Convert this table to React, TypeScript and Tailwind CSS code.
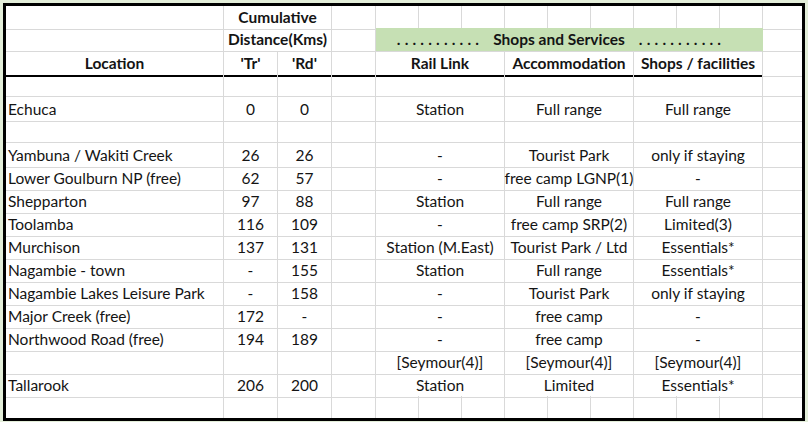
import React from 'react';

const grid =
  'grid grid-cols-[218px_54px_54px_44px_43px_43px_43px_43px_43px_43px_43px_43px_43px_40px]';
const line = 'border-r border-b border-[#d9d9d9]';

const data = [
  ['', '', '', '', '', ''],
  ['Echuca', '0', '0', 'Station', 'Full range', 'Full range'],
  ['', '', '', '', '', ''],
  ['Yambuna / Wakiti Creek', '26', '26', '-', 'Tourist Park', 'only if staying'],
  ['Lower Goulburn NP (free)', '62', '57', '-', 'free camp LGNP(1)', '-'],
  ['Shepparton', '97', '88', 'Station', 'Full range', 'Full range'],
  ['Toolamba', '116', '109', '-', 'free camp SRP(2)', 'Limited(3)'],
  ['Murchison', '137', '131', 'Station (M.East)', 'Tourist Park / Ltd', 'Essentials*'],
  ['Nagambie - town', '-', '155', 'Station', 'Full range', 'Essentials*'],
  ['Nagambie Lakes Leisure Park', '-', '158', '-', 'Tourist Park', 'only if staying'],
  ['Major Creek (free)', '172', '-', '-', 'free camp', '-'],
  ['Northwood Road (free)', '194', '189', '-', 'free camp', '-'],
  ['', '', '', '[Seymour(4)]', '[Seymour(4)]', '[Seymour(4)]'],
  ['Tallarook', '206', '200', 'Station', 'Limited', 'Essentials*'],
];

const Cell: React.FC<{ className?: string; children?: React.ReactNode }> = ({ className = '', children }) => (
  <div className={`${line} flex items-center justify-center whitespace-nowrap overflow-visible ${className}`}>
    {children}
  </div>
);

const App: React.FC = () => {
  const smallCols = Array.from({ length: 9 });

  return (
    <div className="w-[808px] h-[422px] bg-[#e3eed9] pt-[3px] px-[3px]">
      <div
        className="h-[418px] border-[3px] border-black bg-white text-[15.5px] text-[#141414] overflow-hidden"
        style={{ fontFamily: 'Lato, "Open Sans", sans-serif' }}
      >
        {/* header row 1 */}
        <div className={`${grid} h-[22px] font-bold`}>
          <Cell />
          <Cell className="col-span-2">Cumulative</Cell>
          <Cell />
          {smallCols.map((_, i) => (
            <Cell key={i} />
          ))}
          <Cell className="border-r-0" />
        </div>

        {/* header row 2 */}
        <div className={`${grid} h-[24px] font-bold`}>
          <Cell />
          <Cell className="col-span-2">Distance(Kms)</Cell>
          <Cell />
          <Cell className="col-span-9 bg-[#c6e0b4] border-r-[#c6e0b4] pr-[20px]">
            <span className="tracking-[0.2px]">. . . . . . . . . . .</span>
            <span className="mx-[14px]">Shops and Services</span>
            <span className="tracking-[0.2px]">. . . . . . . . . . .</span>
          </Cell>
          <Cell className="border-r-0" />
        </div>

        {/* header row 3 */}
        <div className={`${grid} h-[22px] font-bold`}>
          <Cell className="border-b-2 border-b-black">Location</Cell>
          <Cell className="border-b-2 border-b-black">'Tr'</Cell>
          <Cell className="border-b-2 border-b-black">'Rd'</Cell>
          <Cell className="border-b-2 border-b-black" />
          <Cell className="col-span-3 border-b-2 border-b-black">Rail Link</Cell>
          <Cell className="col-span-3 border-b-2 border-b-black">Accommodation</Cell>
          <Cell className="col-span-3 border-b-2 border-b-black">Shops / facilities</Cell>
          <Cell className="border-r-0" />
        </div>

        {data.map((r, i) => (
          <div key={i} className={`${grid} h-[23px]`}>
            <Cell className="justify-start pl-[2px] pt-[1px]">{r[0]}</Cell>
            <Cell className="pt-[1px]">{r[1]}</Cell>
            <Cell className="pt-[1px]">{r[2]}</Cell>
            <Cell />
            <Cell className="col-span-3 pt-[1px]">{r[3]}</Cell>
            <Cell className="col-span-3 pt-[1px]">{r[4]}</Cell>
            <Cell className="col-span-3 pt-[1px]">{r[5]}</Cell>
            <Cell className="border-r-0" />
          </div>
        ))}

        {/* trailing empty row */}
        <div className={`${grid} h-[22px]`}>
          <Cell className="border-b-0" />
          <Cell className="border-b-0" />
          <Cell className="border-b-0" />
          <Cell className="border-b-0" />
          {smallCols.map((_, i) => (
            <Cell key={i} className="border-b-0" />
          ))}
          <Cell className="border-r-0 border-b-0" />
        </div>
      </div>
    </div>
  );
};

export default App;
